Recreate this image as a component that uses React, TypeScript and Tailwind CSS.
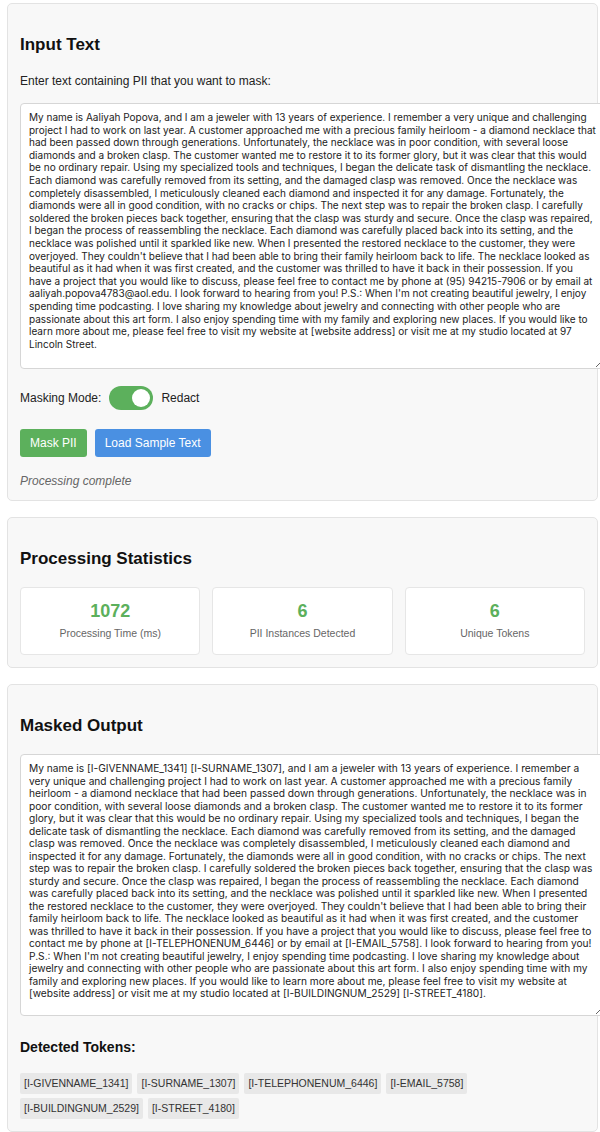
import { useMemo, useState } from 'react';

const SAMPLE_TEXT =
	"My name is Aaliyah Popova, and I am a jeweler with 13 years of experience. I remember a very unique and challenging project I had to work on last year. A customer approached me with a precious family heirloom - a diamond necklace that had been passed down through generations. Unfortunately, the necklace was in poor condition, with several loose diamonds and a broken clasp. The customer wanted me to restore it to its former glory, but it was clear that this would be no ordinary repair. Using my specialized tools and techniques, I began the delicate task of dismantling the necklace. Each diamond was carefully removed from its setting, and the damaged clasp was removed. Once the necklace was completely disassembled, I meticulously cleaned each diamond and inspected it for any damage. Fortunately, the diamonds were all in good condition, with no cracks or chips. The next step was to repair the broken clasp. I carefully soldered the broken pieces back together, ensuring that the clasp was sturdy and secure. Once the clasp was repaired, I began the process of reassembling the necklace. Each diamond was carefully placed back into its setting, and the necklace was polished until it sparkled like new. When I presented the restored necklace to the customer, they were overjoyed. They couldn't believe that I had been able to bring their family heirloom back to life. The necklace looked as beautiful as it had when it was first created, and the customer was thrilled to have it back in their possession. If you have a project that you would like to discuss, please feel free to contact me by phone at (95) 94215-7906 or by email at aaliyah.popova4783@aol.edu. I look forward to hearing from you! P.S.: When I'm not creating beautiful jewelry, I enjoy spending time podcasting. I love sharing my knowledge about jewelry and connecting with other people who are passionate about this art form. I also enjoy spending time with my family and exploring new places. If you would like to learn more about me, please feel free to visit my website at [website address] or visit me at my studio located at 97 Lincoln Street.";

// entity -> token, in the order they were detected
const DETECTED: [string, string][] = [
	['Aaliyah Popova', '[I-GIVENNAME_1341] [I-SURNAME_1307]'],
	['(95) 94215-7906', '[I-TELEPHONENUM_6446]'],
	['aaliyah.popova4783@aol.edu', '[I-EMAIL_5758]'],
	['97 Lincoln Street', '[I-BUILDINGNUM_2529] [I-STREET_4180]'],
];

const TOKENS = [
	'[I-GIVENNAME_1341]',
	'[I-SURNAME_1307]',
	'[I-TELEPHONENUM_6446]',
	'[I-EMAIL_5758]',
	'[I-BUILDINGNUM_2529]',
	'[I-STREET_4180]',
];

function Card({ title, children }: { title: string; children: React.ReactNode }) {
	return (
		<section className="ml-[7px] w-[591px] rounded-[5px] border border-[#e3e3e3] bg-[#f8f8f8] px-3 pt-3 pb-3">
			<h2 className="mt-[19px] mb-[18px] text-[17px] leading-[20px] font-bold text-[#111]">{title}</h2>
			{children}
		</section>
	);
}

function Stat({ value, label }: { value: number; label: string }) {
	return (
		<div className="flex h-[68px] flex-col items-center rounded-[4px] border border-[#e6e6e6] bg-white pt-[13px]">
			<div className="text-[18px] leading-[21px] font-bold text-[#5cb05c]">{value}</div>
			<div className="mt-[5px] text-[10.5px] leading-[13px] text-[#666]">{label}</div>
		</div>
	);
}

export default function App() {
	const [input, setInput] = useState(SAMPLE_TEXT);
	const [redact, setRedact] = useState(true);

	const masked = useMemo(
		() => DETECTED.reduce((text, [from, to]) => text.split(from).join(to), SAMPLE_TEXT),
		[],
	);

	return (
		<div className="w-[600px] overflow-x-hidden bg-white pt-[3px] pb-[2px] font-['Liberation_Sans',Arial,sans-serif] text-[#222]">
			<Card title="Input Text">
				<p className="text-[12px] leading-[16px]">Enter text containing PII that you want to mask:</p>
				<textarea
					value={input}
					onChange={e => setInput(e.target.value)}
					spellCheck={false}
					className="mt-[14px] block h-[266px] w-[585px] rounded-[4px] border border-[#d6d6d6] bg-white px-2 pt-[7px] pb-2 font-['Inter',sans-serif] text-[10px] leading-[12.6px] text-[#222] outline-none"
				/>
				<div className="mt-[17px] flex items-center gap-2 text-[12px]">
					<span>Masking Mode:</span>
					<button
						onClick={() => setRedact(!redact)}
						className={
							'relative h-[24px] w-[44px] rounded-full ' + (redact ? 'bg-[#5cb05c]' : 'bg-[#ccc]')
						}
					>
						<span
							className={
								'absolute top-[3px] h-[18px] w-[18px] rounded-full bg-white ' +
								(redact ? 'left-[23px]' : 'left-[3px]')
							}
						/>
					</button>
					<span>{redact ? 'Redact' : 'Replace'}</span>
				</div>
				<div className="mt-[19px] flex gap-2">
					<button className="h-[28px] rounded-[3px] bg-[#5cb05c] px-[10px] text-[12px] text-white">Mask PII</button>
					<button
						onClick={() => setInput(SAMPLE_TEXT)}
						className="h-[28px] rounded-[3px] bg-[#4a90e2] px-[10px] text-[12px] text-white"
					>
						Load Sample Text
					</button>
				</div>
				<p className="mt-[17px] text-[12px] leading-[14px] text-[#666] italic">Processing complete</p>
			</Card>

			<div className="h-4" />

			<Card title="Processing Statistics">
				<div className="grid grid-cols-3 gap-3">
					<Stat value={1072} label="Processing Time (ms)" />
					<Stat value={6} label="PII Instances Detected" />
					<Stat value={6} label="Unique Tokens" />
				</div>
			</Card>

			<div className="h-4" />

			<Card title="Masked Output">
				<textarea
					readOnly
					value={masked}
					className="block h-[262px] w-[585px] rounded-[4px] border border-[#d6d6d6] bg-white px-2 pt-[7px] pb-2 font-['Inter',sans-serif] text-[10.2px] leading-[12.5px] text-[#222] outline-none"
				/>
				<h3 className="mt-[23px] text-[14px] leading-[16px] font-bold text-[#111]">Detected Tokens:</h3>
				<div className="mt-[18px] flex flex-wrap gap-x-[5px] gap-y-[4px]">
					{TOKENS.map(t => (
						<span key={t} className="rounded-[2px] bg-[#e8e8e8] px-[4px] py-[4px] text-[10.5px] leading-[13px] text-[#333]">
							{t}
						</span>
					))}
				</div>
			</Card>
		</div>
	);
}
